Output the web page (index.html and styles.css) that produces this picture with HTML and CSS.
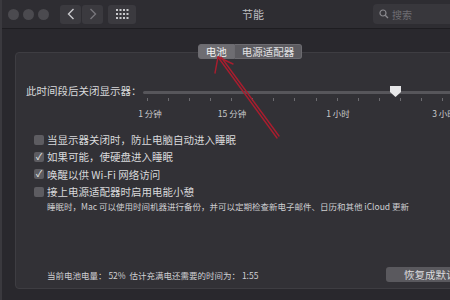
FILE: index.html
```html
<!DOCTYPE html>
<html lang="zh-CN">
  <head>
    <meta charset="utf-8">
    <title>节能</title>
    <link rel="stylesheet" href="styles.css">
  </head>
  <body>
    <div class="window">
      <div class="titlebar">
        <div class="lights">
          <span class="light"></span>
          <span class="light"></span>
          <span class="light"></span>
        </div>
        <div class="nav">
          <button class="nav-btn">
            <svg width="8" height="12" viewBox="0 0 8 12"><path d="M6.5 1 L1.5 6 L6.5 11" fill="none" stroke="#c9c9cc" stroke-width="1.4"/></svg>
          </button>
          <button class="nav-btn">
            <svg width="8" height="12" viewBox="0 0 8 12"><path d="M1.5 1 L6.5 6 L1.5 11" fill="none" stroke="#77767b" stroke-width="1.4"/></svg>
          </button>
        </div>
        <button class="grid-btn">
          <svg width="14" height="12" viewBox="0 0 14 12" fill="#c9c9cc">
            <rect x="1" y="1" width="2" height="2"/><rect x="4.5" y="1" width="2" height="2"/><rect x="8" y="1" width="2" height="2"/><rect x="11.5" y="1" width="2" height="2"/>
            <rect x="1" y="5" width="2" height="2"/><rect x="4.5" y="5" width="2" height="2"/><rect x="8" y="5" width="2" height="2"/><rect x="11.5" y="5" width="2" height="2"/>
            <rect x="1" y="9" width="2" height="2"/><rect x="4.5" y="9" width="2" height="2"/><rect x="8" y="9" width="2" height="2"/><rect x="11.5" y="9" width="2" height="2"/>
          </svg>
        </button>
        <div class="title">节能</div>
        <div class="search">
          <svg width="10" height="10" viewBox="0 0 10 10"><circle cx="4" cy="4" r="3" fill="none" stroke="#8a898e" stroke-width="1.2"/><path d="M6.2 6.2 L9 9" stroke="#8a898e" stroke-width="1.3"/></svg>
          <span>搜索</span>
        </div>
      </div>

      <div class="content">
        <div class="panel">
          <div class="tabs">
            <span class="tab active">电池</span>
            <span class="tab">电源适配器</span>
          </div>

          <div class="slider-row">
            <div class="slider-label">此时间段后关闭显示器：</div>
            <div class="slider">
              <div class="track"></div>
              <div class="thumb"></div>
              <div class="ticks">
                <span></span><span></span><span></span><span></span><span></span>
                <span></span><span></span><span></span><span></span><span></span>
                <span></span><span></span><span></span><span></span><span></span>
              </div>
              <div class="scale">
                <span class="mark m1"><span>1 分钟</span></span>
                <span class="mark m2"><span>15 分钟</span></span>
                <span class="mark m3"><span>1 小时</span></span>
                <span class="mark m4"><span>3 小时</span></span>
              </div>
            </div>
          </div>

          <ul class="options">
            <li><span class="check"></span>当显示器关闭时，防止电脑自动进入睡眠</li>
            <li><span class="check on">✓</span>如果可能，使硬盘进入睡眠</li>
            <li><span class="check on">✓</span>唤醒以供 Wi-Fi 网络访问</li>
            <li><span class="check"></span>接上电源适配器时启用电能小憩</li>
          </ul>
          <p class="hint">睡眠时，Mac 可以使用时间机器进行备份，并可以定期检查新电子邮件、日历和其他 iCloud 更新</p>

          <div class="footer">
            <span class="status">当前电池电量： 52%&nbsp;&nbsp;估计充满电还需要的时间为： 1:55</span>
            <button class="restore">恢复成默认</button>
          </div>
        </div>
      </div>
    </div>

    <svg class="arrow" width="450" height="300" viewBox="0 0 450 300">
      <g fill="none" stroke="#a81d2e" stroke-width="1.4" stroke-linecap="round">
        <path d="M218 57 L277 138"/>
        <path d="M221 57 L279 136"/>
        <path d="M218 57 L215 73"/>
        <path d="M218 57 L233 64"/>
      </g>
    </svg>
  </body>
</html>
```

FILE: styles.css
```css
* {
  box-sizing: border-box;
}

body {
  margin: 0;
  width: 450px;
  height: 300px;
  overflow: hidden;
  background: #29282d;
  font-family: "Noto Sans CJK SC", "Noto Sans", sans-serif;
  color: #d9d9db;
}

.window {
  height: 300px;
  border-left: 2px solid #3a393e;
}

.titlebar {
  height: 29px;
  display: flex;
  align-items: center;
  padding-left: 6px;
  background: #2e2d32;
  border-bottom: 1px solid #1e1d21;
}

.lights {
  display: flex;
  gap: 4px;
}

.light {
  width: 11px;
  height: 11px;
  border-radius: 50%;
  background: #4b4a4f;
}

.nav {
  display: flex;
  gap: 1px;
  margin-left: 11px;
}

button {
  font-family: inherit;
  border: none;
  padding: 0;
}

.nav-btn,
.grid-btn {
  height: 19px;
  display: flex;
  align-items: center;
  justify-content: center;
  background: #3b3a3f;
  border-radius: 3px;
}

.nav-btn {
  width: 21px;
}

.grid-btn {
  width: 28px;
  margin-left: 5px;
}

.title {
  margin-left: 106px;
  font-size: 11px;
  color: #bdbdc0;
}

.search {
  margin-left: auto;
  width: 77px;
  height: 20px;
  display: flex;
  align-items: center;
  gap: 3px;
  padding-left: 6px;
  background: #38373c;
  border-radius: 4px 0 0 4px;
  font-size: 10px;
  color: #6e6d72;
}

.content {
  padding: 23px 0 0 13px;
}

.panel {
  width: 470px;
  height: 237px;
  display: flex;
  flex-direction: column;
  background: #323136;
  border: 1px solid #3e3d42;
  border-radius: 4px;
}

.tabs {
  display: flex;
  justify-content: center;
  margin-top: -9px;
}

.tab {
  height: 15px;
  line-height: 14px;
  padding: 0 7px;
  font-size: 10.5px;
  color: #e2e2e4;
  background: #5c5b60;
  border: 1px solid #6c6b70;
}

.tab:first-child {
  border-radius: 3px 0 0 3px;
}

.tab:last-child {
  border-radius: 0 3px 3px 0;
  border-left: none;
}

.tab.active {
  background: #6e6d72;
  color: #f2f2f3;
}

.slider-row {
  display: flex;
  margin-top: 16px;
  padding-left: 10px;
}

.slider-label {
  width: 117px;
  font-size: 10.5px;
  line-height: 14px;
  margin-top: 9px;
}

.slider {
  position: relative;
  flex: 1;
  padding-top: 16px;
}

.track {
  height: 3px;
  background: #57565b;
  border-radius: 2px;
}

.thumb {
  position: absolute;
  left: 247px;
  top: 11px;
  width: 11px;
  height: 11px;
  background: #e6e6e8;
  clip-path: polygon(0 0, 100% 0, 100% 55%, 50% 100%, 0 55%);
}

.ticks {
  display: flex;
  justify-content: space-between;
  width: 296px;
  margin: 4px 0 0 4px;
}

.ticks span {
  width: 1px;
  height: 3px;
  background: #6c6b70;
}

.scale {
  display: flex;
  margin-top: 6px;
  height: 12px;
  font-size: 8.5px;
  color: #c9c9cc;
}

.mark {
  width: 0;
  display: flex;
  justify-content: center;
  white-space: nowrap;
}

.m1 { margin-left: 7px; }
.m2 { margin-left: 82px; }
.m3 { margin-left: 106px; }
.m4 { margin-left: 106px; }

.options {
  list-style: none;
  margin: 12px 0 0;
  padding: 0 0 0 18px;
  font-size: 10.5px;
}

.options li {
  display: flex;
  align-items: center;
  gap: 3px;
  height: 17.3px;
}

.check {
  width: 10px;
  height: 10px;
  border-radius: 2px;
  background: #5d5c61;
  font-size: 9px;
  line-height: 10px;
  text-align: center;
  color: #f0f0f0;
}

.hint {
  margin: 0 0 0 31px;
  font-size: 8.5px;
  line-height: 12px;
  color: #cfcfd2;
}

.footer {
  margin-top: auto;
  display: flex;
  align-items: center;
  padding: 0 23px 6px 31px;
}

.status {
  font-size: 8.5px;
  color: #cfcfd2;
}

.restore {
  margin-left: auto;
  width: 75px;
  height: 15px;
  padding-left: 18px;
  text-align: left;
  font-size: 10.5px;
  line-height: 15px;
  color: #dcdcde;
  background: #5a595e;
  border-radius: 3px;
}

.arrow {
  position: absolute;
  left: 0;
  top: 0;
  pointer-events: none;
}
```
